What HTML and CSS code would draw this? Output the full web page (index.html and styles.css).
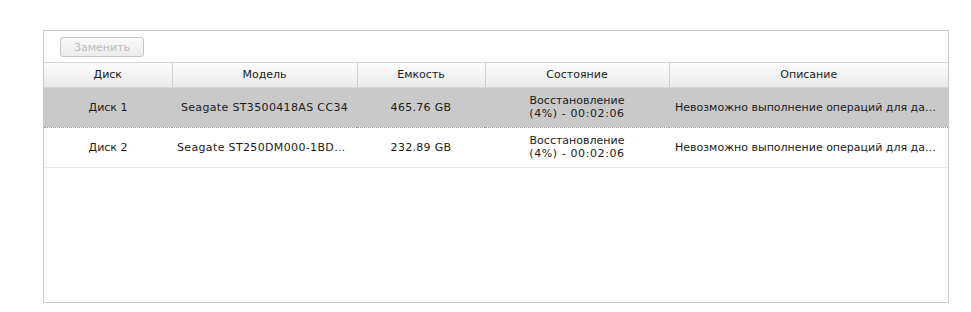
FILE: index.html
```html
<!DOCTYPE html>
<html lang="ru">
<head>
  <meta charset="UTF-8">
  <title>Диски</title>
  <link rel="stylesheet" href="styles.css">
</head>
<body>
  <div class="panel">
    <div class="toolbar">
      <button class="btn" disabled>Заменить</button>
    </div>
    <table class="grid">
      <colgroup>
        <col class="c1"><col class="c2"><col class="c3"><col class="c4"><col>
      </colgroup>
      <thead>
        <tr>
          <th>Диск</th>
          <th>Модель</th>
          <th>Емкость</th>
          <th>Состояние</th>
          <th>Описание</th>
        </tr>
      </thead>
      <tbody>
        <tr class="selected">
          <td>Диск 1</td>
          <td><div class="cut mid lat">Seagate ST3500418AS CC34</div></td>
          <td class="num">465.76 GB</td>
          <td>Восстановление<br><span class="time">(4%) - 00:02:06</span></td>
          <td class="desc"><div class="cut">Невозможно выполнение операций для данного диска</div></td>
        </tr>
        <tr>
          <td>Диск 2</td>
          <td><div class="cut mid lat">Seagate ST250DM000-1BD141</div></td>
          <td class="num">232.89 GB</td>
          <td>Восстановление<br><span class="time">(4%) - 00:02:06</span></td>
          <td class="desc"><div class="cut">Невозможно выполнение операций для данного диска</div></td>
        </tr>
      </tbody>
    </table>
  </div>
</body>
</html>
```
FILE: styles.css
```css
*{
  margin: 0;
  padding: 0;
  box-sizing: border-box;
}
body{
  background: #fff;
  font-family: "DejaVu Sans", Verdana, sans-serif;
  font-size: 11px;
  color: #1a1a1a;
  padding: 30px 23px 0 43px;
}
.panel{
  width: 906px;
  height: 273px;
  border: 1px solid #c8c8c8;
}
.toolbar{
  height: 32px;
  padding: 6px 0 0 16px;
  border-bottom: 1px solid #d6d6d6;
}
.btn{
  width: 84px;
  height: 20px;
  font-family: inherit;
  font-size: 11px;
  color: #bdbdbd;
  background: linear-gradient(#fafafa, #ececec);
  border: 1px solid #c4c4c4;
  border-radius: 3px;
}
.grid{
  width: 100%;
  border-collapse: collapse;
  table-layout: fixed;
}
.c1{ width: 128px; }
.c2{ width: 185px; }
.c3{ width: 128px; }
.c4{ width: 184px; }
th{
  height: 24px;
  font-weight: normal;
  color: #1a1a1a;
  background: linear-gradient(#fdfdfd, #e9e9e9);
  border-left: 1px solid #d0d0d0;
  border-bottom: 1px solid #d8d8d8;
}
th:first-child{
  border-left: none;
}
td{
  height: 40px;
  text-align: center;
  line-height: 13px;
  border-bottom: 1px solid #e6e6e6;
}
.selected td{
  background: #c9c9c9;
  border-top: 1px dotted #9a9a9a;
  border-bottom: 1px dotted #9a9a9a;
}
.desc{
  text-align: left;
  padding: 0 8px 0 6px;
}
.cut{
  overflow: hidden;
  white-space: nowrap;
  text-overflow: ellipsis;
}
.mid{
  padding: 0 5px;
}
.lat{
  letter-spacing: 0.35px;
}
.num{
  letter-spacing: 0.3px;
}
.time{
  letter-spacing: 0.6px;
}
```
